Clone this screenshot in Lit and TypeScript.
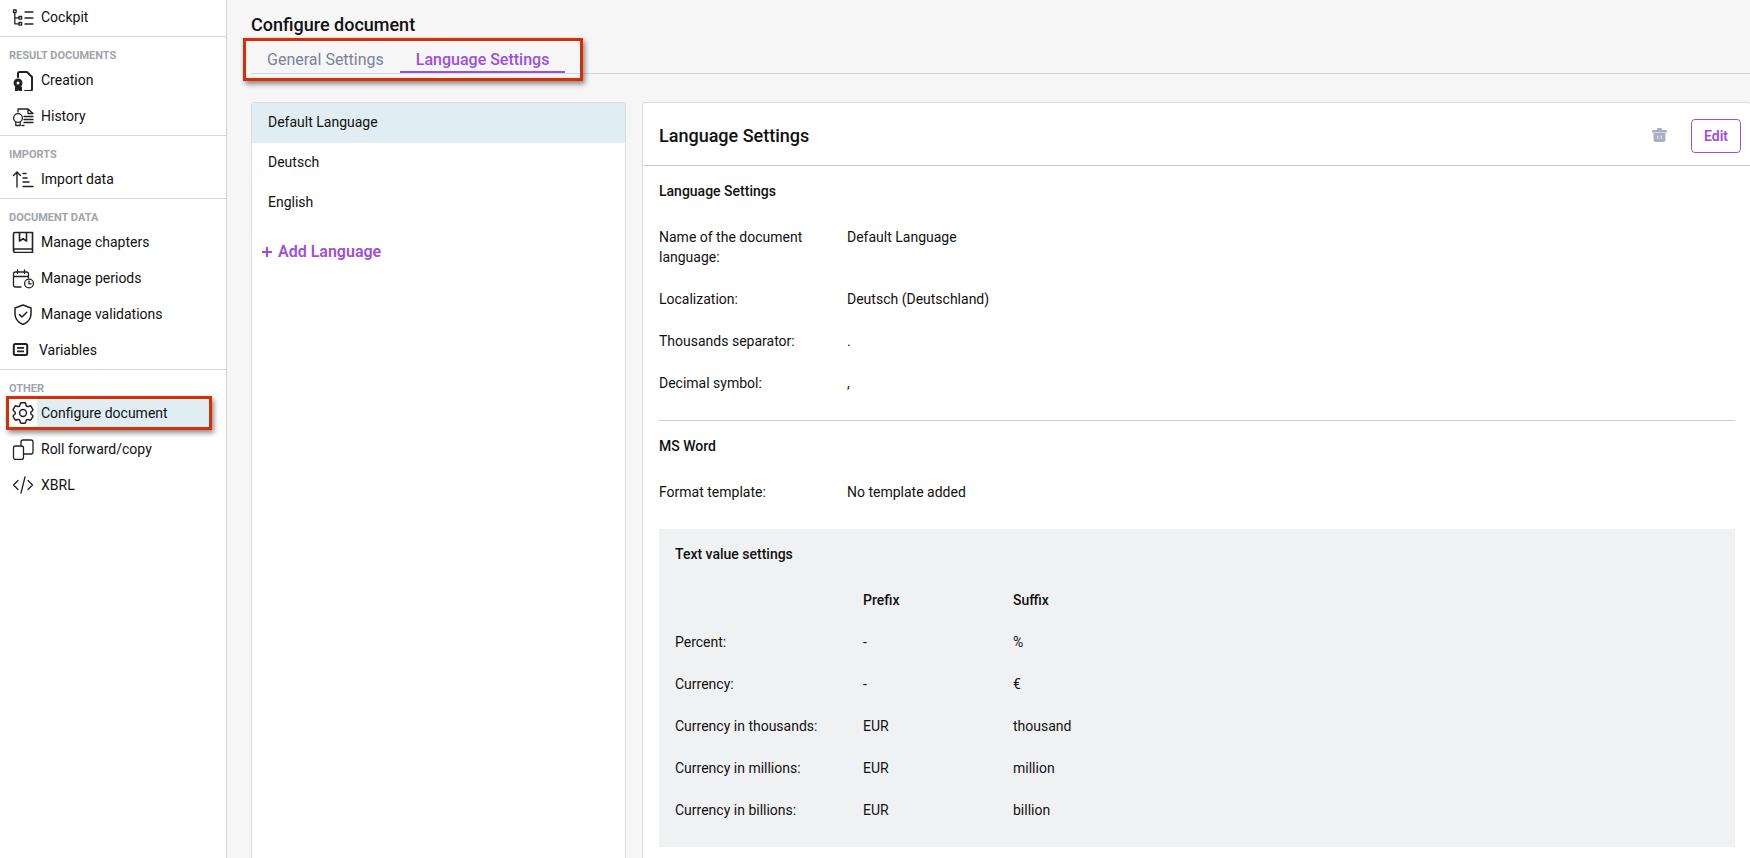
import { LitElement, html, css, svg } from 'lit';
import { customElement } from 'lit/decorators.js';

const box = (body: unknown) => html`<svg class="ico" viewBox="0 0 22 22" fill="none" stroke="#222226" stroke-width="1.3" stroke-linecap="round" stroke-linejoin="round">${body}</svg>`;

const icons: Record<string, unknown> = {
  cockpit: box(svg`<rect x="1.5" y="4" width="2.6" height="2.6"/><rect x="7" y="10.5" width="2.6" height="2.6"/><rect x="7" y="16.5" width="2.6" height="2.6"/><path d="M2.8 6.6V17.8H7M2.8 11.8H7M13 6h8M13 12h8M13 18h8"/>`),
  creation: box(svg`<path stroke-width="2" d="M6 8V4.5Q6 3 7.5 3H15L20 8V20Q20 22 18 22H13"/><circle cx="6" cy="14" r="3" stroke-width="3"/><path fill="#222226" stroke="none" d="M3 17.5H10V23L6.5 21.5 3 23Z"/>`),
  history: box(svg`<path d="M6 7V4H16L21 8.5H16V4M12 11.5H21M12 14.5H21M12 17.5H21"/><circle cx="6" cy="13" r="4.4"/><path d="M3.8 17V20.5H8.2V17M10 20.5H12"/>`),
  import: box(svg`<path stroke-width="1.4" d="M5 19V4M1.5 7.5 5 4l3.5 3.5M11 5.5h3M11 10h4M11 14h6M11 18.5h10"/>`),
  chapters: box(svg`<path stroke-width="1.6" d="M1.5 3Q1.5 1.5 3 1.5H20.5V21.5H3.5Q1.5 21.5 1.5 19.5ZM1.5 19.5Q1.5 18 3.5 18H20.5M7.5 1.5V10L11 7.8 14.5 10V1.5"/>`),
  periods: box(svg`<path d="M9 20H3.5Q1.5 20 1.5 18V7Q1.5 5 3.5 5H14.5Q16.5 5 16.5 7V11M1.5 9.5H16.5M5.5 3V6.5M12.5 3V6.5"/><circle cx="17" cy="16.5" r="4.4"/><path d="M17 14V16.8H19.2"/>`),
  validations: box(svg`<path stroke-width="1.5" d="M11 2 19 5V11C19 16 15.5 19.5 11 21.5 6.5 19.5 3 16 3 11V5Z"/><path stroke-width="1.5" d="M7.5 11.5 10 14 14.8 9.2"/>`),
  variables: box(svg`<rect x="1.8" y="5" width="13.4" height="11" rx="1.5" stroke-width="2"/><path stroke-width="1.8" d="M5 8.8H12M5 12.4H12" stroke-linecap="butt"/>`),
  configure: html`<svg class="ico" viewBox="2.4 2.4 19.2 19.2" fill="none" stroke="#222226" stroke-width="1.3" stroke-linecap="round" stroke-linejoin="round"><path d="M9.594 3.94c.09-.542.56-.94 1.11-.94h2.593c.55 0 1.02.398 1.11.94l.213 1.281c.063.374.313.686.645.87.074.04.147.083.22.127.325.196.72.257 1.075.124l1.217-.456a1.125 1.125 0 0 1 1.37.49l1.296 2.247a1.125 1.125 0 0 1-.26 1.431l-1.003.827c-.293.241-.438.613-.43.992a7.723 7.723 0 0 1 0 .255c-.008.378.137.75.43.991l1.004.827c.424.35.534.955.26 1.43l-1.298 2.247a1.125 1.125 0 0 1-1.369.491l-1.217-.456c-.355-.133-.75-.072-1.076.124a6.47 6.47 0 0 1-.22.128c-.331.183-.581.495-.644.869l-.213 1.281c-.09.543-.56.94-1.11.94h-2.594c-.55 0-1.019-.398-1.11-.94l-.213-1.281c-.062-.374-.312-.686-.644-.87a6.52 6.52 0 0 1-.22-.127c-.325-.196-.72-.257-1.076-.124l-1.217.456a1.125 1.125 0 0 1-1.369-.49l-1.297-2.247a1.125 1.125 0 0 1 .26-1.431l1.004-.827c.292-.24.437-.613.43-.991a6.932 6.932 0 0 1 0-.255c.007-.38-.138-.751-.43-.992l-1.004-.827a1.125 1.125 0 0 1-.26-1.43l1.297-2.247a1.125 1.125 0 0 1 1.37-.491l1.216.456c.356.133.751.072 1.076-.124.072-.044.146-.086.22-.128.332-.183.582-.495.644-.869l.214-1.28Z"/><path d="M15 12a3 3 0 1 1-6 0 3 3 0 0 1 6 0Z"/></svg>`,
  roll: box(svg`<rect x="1.5" y="8" width="10" height="13.5" rx="2"/><path d="M9 8V4Q9 2 11 2H19Q21 2 21 4V14Q21 16 19 16H11.5"/>`),
  xbrl: box(svg`<path d="M6 6.5 1.5 11 6 15.5M16 6.5 20.5 11 16 15.5M13 3 9 19"/>`),
};

const sections = [
  { label: '', items: [['cockpit', 'Cockpit']] },
  { label: 'Result documents', items: [['creation', 'Creation'], ['history', 'History']] },
  { label: 'Imports', items: [['import', 'Import data']] },
  { label: 'Document data', items: [['chapters', 'Manage chapters'], ['periods', 'Manage periods'], ['validations', 'Manage validations'], ['variables', 'Variables']] },
  { label: 'Other', items: [['configure', 'Configure document'], ['roll', 'Roll forward/copy'], ['xbrl', 'XBRL']] },
];

const settings = [
  ['Name of the document language:', 'Default Language'],
  ['Localization:', 'Deutsch (Deutschland)'],
  ['Thousands separator:', '.'],
  ['Decimal symbol:', ','],
];

const textValues = [
  ['Percent:', '-', '%'],
  ['Currency:', '-', '€'],
  ['Currency in thousands:', 'EUR', 'thousand'],
  ['Currency in millions:', 'EUR', 'million'],
  ['Currency in billions:', 'EUR', 'billion'],
];

@customElement('app-root')
export class AppRoot extends LitElement {
  static styles = css`
    :host {
      display: flex;
      position: relative;
      height: 100vh;
      overflow: hidden;
      font-family: Roboto, sans-serif;
      font-size: 14px;
      line-height: 20px;
      color: #111;
      background: #f6f6f6;
    }
    aside {
      width: 226px;
      flex: none;
      background: #fff;
      border-right: 1px solid #cbd2dc;
    }
    .section {
      border-top: 1px solid #d3d7de;
      padding-bottom: 1px;
    }
    .section:first-child {
      border-top: none;
      margin-top: -1px;
    }
    .section-label {
      height: 25px;
      padding: 13px 0 0 9px;
      box-sizing: border-box;
      font-size: 11px;
      line-height: 12px;
      font-weight: 700;
      text-transform: uppercase;
      color: #a2a4ab;
    }
    .item {
      display: flex;
      align-items: center;
      height: 36px;
      padding-left: 12px;
    }
    .ico {
      width: 22px;
      height: 22px;
      flex: none;
      margin-right: 7px;
    }
    .item.variables .ico {
      margin-right: 5px;
    }
    .item.active .label {
      height: 28px;
      width: 168px;
      margin-left: -4px;
      padding-left: 4px;
      line-height: 28px;
      background: #e0eef4;
    }
    main {
      flex: 1;
      min-width: 0;
      display: flex;
      flex-direction: column;
      padding-left: 24px;
    }
    h1 {
      margin: 0;
      padding-top: 13px;
      font-size: 18px;
      line-height: 24px;
      font-weight: 500;
    }
    .tabs {
      display: flex;
      border-bottom: 1px solid #d3d5dc;
    }
    .tab {
      padding: 13px 16px 1px;
      font-size: 16px;
      border-bottom: 2px solid transparent;
      color: #7b829b;
    }
    .tab.active {
      font-weight: 500;
      color: #9d4edd;
      border-bottom-color: #9d4edd;
    }
    .columns {
      flex: 1;
      display: flex;
      gap: 16px;
      margin-top: 28px;
      margin-bottom: -6px;
      min-height: 0;
    }
    .panel {
      background: #fff;
      border: 1px solid #d8dadd;
      border-radius: 3px;
    }
    .languages {
      width: 373px;
      flex: none;
    }
    .language {
      height: 40px;
      box-sizing: border-box;
      padding: 0 0 2px 16px;
      display: flex;
      align-items: center;
    }
    .language.active {
      background: #e0eef4;
    }
    .add {
      display: flex;
      align-items: center;
      gap: 6px;
      margin-top: 17px;
      padding-left: 10px;
      font-size: 16px;
      line-height: 24px;
      font-weight: 600;
      color: #9d4edd;
    }
    .add svg {
      width: 10px;
      height: 10px;
    }
    .details {
      flex: 1;
      min-width: 0;
      margin-right: -1px;
    }
    .details-head {
      display: flex;
      align-items: center;
      justify-content: space-between;
      box-sizing: border-box;
      height: 63px;
      padding: 4px 9px 0 16px;
      border-bottom: 1px solid #c9ced6;
      font-size: 18px;
      font-weight: 500;
    }
    .actions {
      display: flex;
      align-items: center;
      gap: 24px;
    }
    .trash {
      width: 15px;
      height: 14px;
      margin-top: -2px;
    }
    .edit {
      width: 50px;
      height: 34px;
      box-sizing: border-box;
      border: 1px solid #9d4edd;
      border-radius: 4px;
      display: flex;
      align-items: center;
      justify-content: center;
      font-size: 14px;
      font-weight: 600;
      color: #9d4edd;
    }
    .details-body {
      padding: 15px 15px 0 16px;
    }
    h3 {
      margin: 0;
      font-size: 14px;
      line-height: 20px;
      font-weight: 500;
    }
    .rows {
      display: grid;
      grid-template-columns: 168px 1fr;
      column-gap: 20px;
      row-gap: 22px;
      margin-top: 26px;
    }
    hr {
      margin: 27px 0 15px;
      border: none;
      border-top: 1px solid #c9cfd9;
    }
    .values {
      margin-top: 27px;
      padding: 15px 16px 27px;
      background: #f0f1f3;
    }
    .values-grid {
      display: grid;
      grid-template-columns: 188px 150px 1fr;
      row-gap: 22px;
      margin-top: 26px;
    }
    .head {
      font-weight: 500;
    }
    .annotation {
      position: absolute;
      box-sizing: border-box;
      border: 3px solid #d82e08;
      box-shadow: 2px 3px 5px rgba(0, 0, 0, 0.45);
      pointer-events: none;
    }
    .annotation.nav {
      left: 6px;
      top: 396px;
      width: 206px;
      height: 34px;
    }
    .annotation.tab-box {
      left: 243px;
      top: 38px;
      width: 340px;
      height: 43px;
    }
  `;

  render() {
    return html`
      <aside>
        ${sections.map(
          (s) => html`
            <div class="section">
              ${s.label ? html`<div class="section-label">${s.label}</div>` : ''}
              ${s.items.map(
                ([icon, text]) => html`
                  <div class="item ${icon} ${icon === 'configure' ? 'active' : ''}">
                    ${icons[icon]}<span class="label">${text}</span>
                  </div>
                `
              )}
            </div>
          `
        )}
      </aside>
      <main>
        <h1>Configure document</h1>
        <div class="tabs">
          <div class="tab">General Settings</div>
          <div class="tab active">Language Settings</div>
        </div>
        <div class="columns">
          <section class="panel languages">
            <div class="language active">Default Language</div>
            <div class="language">Deutsch</div>
            <div class="language">English</div>
            <div class="add">
              <svg viewBox="0 0 10 10" fill="none" stroke="#9d4edd" stroke-width="2"><path d="M5 0V10M0 5H10" /></svg>
              Add Language
            </div>
          </section>
          <section class="panel details">
            <div class="details-head">
              <span>Language Settings</span>
              <div class="actions">
                <svg class="trash" viewBox="0 0 15 14" fill="#a9adc0">
                  <path d="M5 1.4Q5 0 6.4 0H8.6Q10 0 10 1.4V2H14Q15 2 15 3V4.4H0V3Q0 2 1 2H5Z" />
                  <path d="M1.6 5H13.4V12Q13.4 14 11.4 14H3.6Q1.6 14 1.6 12Z" />
                  <path fill="#dcdee6" d="M5 7.5H6.4V11H5ZM8.6 7.5H10V11H8.6Z" />
                </svg>
                <div class="edit">Edit</div>
              </div>
            </div>
            <div class="details-body">
              <h3>Language Settings</h3>
              <div class="rows">
                ${settings.map(([k, v]) => html`<div>${k}</div><div>${v}</div>`)}
              </div>
              <hr />
              <h3>MS Word</h3>
              <div class="rows">
                <div>Format template:</div>
                <div>No template added</div>
              </div>
              <div class="values">
                <h3>Text value settings</h3>
                <div class="values-grid">
                  <div></div>
                  <div class="head">Prefix</div>
                  <div class="head">Suffix</div>
                  ${textValues.map(([k, p, s]) => html`<div>${k}</div><div>${p}</div><div>${s}</div>`)}
                </div>
              </div>
            </div>
          </section>
        </div>
      </main>
      <div class="annotation nav"></div>
      <div class="annotation tab-box"></div>
    `;
  }
}
